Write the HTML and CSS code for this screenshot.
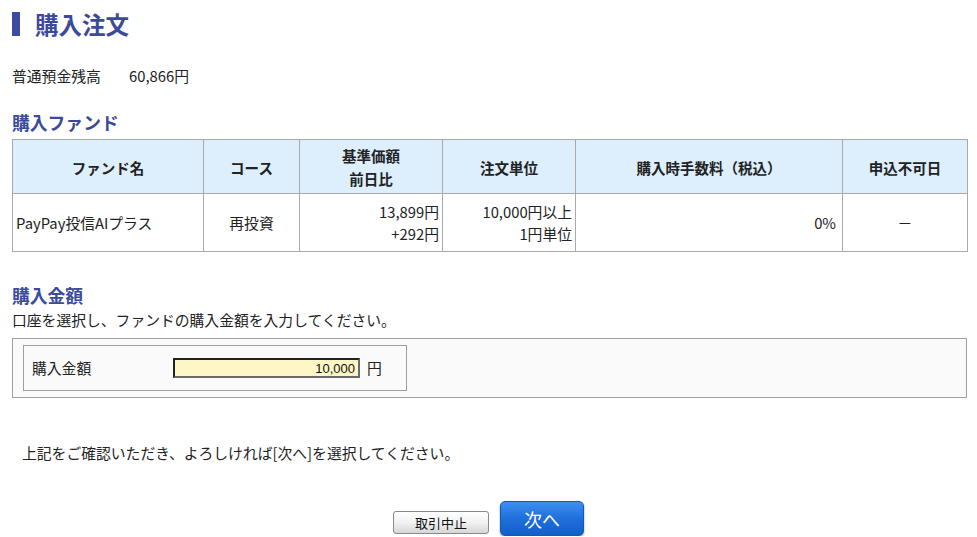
FILE: index.html
```
<!DOCTYPE html>
<html lang="ja">
<head>
  <meta charset="UTF-8">
  <meta name="viewport" content="width=device-width, initial-scale=1.0">
  <title>購入注文</title>
  <link rel="stylesheet" href="styles.css">
</head>
<body>
  <div class="page">
    <h1 class="page-title">購入注文</h1>

    <p class="balance">
      <span class="balance-label">普通預金残高</span>
      <span class="balance-value">60,866円</span>
    </p>

    <h2 class="section-title">購入ファンド</h2>
    <table class="fund-table">
      <colgroup>
        <col style="width: 191px">
        <col style="width: 96px">
        <col style="width: 143px">
        <col style="width: 133px">
        <col style="width: 267px">
        <col style="width: 125px">
      </colgroup>
      <thead>
        <tr>
          <th>ファンド名</th>
          <th>コース</th>
          <th>基準価額<br>前日比</th>
          <th>注文単位</th>
          <th>購入時手数料（税込）</th>
          <th>申込不可日</th>
        </tr>
      </thead>
      <tbody>
        <tr>
          <td>PayPay投信AIプラス</td>
          <td class="center">再投資</td>
          <td class="num">13,899円<br>+292円</td>
          <td class="num">10,000円以上<br>1円単位</td>
          <td class="num fee">0%</td>
          <td class="center">－</td>
        </tr>
      </tbody>
    </table>

    <h2 class="section-title amount-title">購入金額</h2>
    <p class="note">口座を選択し、ファンドの購入金額を入力してください。</p>

    <div class="amount-panel">
      <div class="amount-box">
        <span class="amount-label">購入金額</span>
        <input type="text" class="amount-input" value="10,000">
        <span class="unit">円</span>
      </div>
    </div>

    <p class="confirm">上記をご確認いただき、よろしければ[次へ]を選択してください。</p>

    <div class="actions">
      <button class="btn-cancel">取引中止</button>
      <button class="btn-next">次へ</button>
    </div>
  </div>
</body>
</html>
```

FILE: styles.css
```
:root {
  --title: #3b4a9e;
  --border: #aaaaaa;
  --head-bg: #ddeefc;
  --text: #222222;
}
* {
  box-sizing: border-box;
  margin: 0;
  padding: 0;
}
body {
  font-family: "Noto Sans CJK JP", "Noto Sans", sans-serif;
  font-size: 14.8px;
  line-height: 22px;
  color: var(--text);
  background: #ffffff;
}
.page {
  width: 955px;
  margin-left: 12px;
  padding-top: 12px;
}
.page-title {
  display: flex;
  align-items: center;
  height: 24px;
  font-size: 23.5px;
  line-height: 24px;
  font-weight: bold;
  color: var(--title);
}
.page-title::before {
  content: "";
  width: 8px;
  height: 24px;
  background: #3b4ba4;
  margin-right: 15px;
}
.balance {
  margin-top: 29px;
  display: flex;
}
.balance-label {
  width: 117px;
}
.section-title {
  margin-top: 23px;
  font-size: 17.8px;
  line-height: 24px;
  font-weight: bold;
  color: var(--title);
}
.fund-table {
  margin-top: 5px;
  width: 955px;
  border-collapse: collapse;
  table-layout: fixed;
}
.fund-table th,
.fund-table td {
  border: 1px solid var(--border);
}
.fund-table th {
  background: var(--head-bg);
  font-size: 14.5px;
  font-weight: bold;
  line-height: 23px;
  padding: 4px 4px 3px;
  height: 54px;
  text-align: center;
}
.fund-table td {
  padding: 6px 3px 6px;
  height: 58px;
  vertical-align: middle;
}
.fund-table td.center {
  text-align: center;
}
.fund-table td.num {
  text-align: right;
}
.fund-table td.fee {
  padding-right: 6px;
}
.amount-title {
  margin-top: 31px;
}
.note {
  margin-top: 2px;
}
.amount-panel {
  margin-top: 7px;
  background: #fafafa;
  border: 1px solid #a0a0a0;
  padding: 6px 10px;
}
.amount-box {
  width: 384px;
  height: 46px;
  border: 1px solid #a0a0a0;
  display: flex;
  align-items: center;
  padding-left: 8px;
}
.amount-label {
  width: 141px;
}
.amount-input {
  width: 187px;
  height: 20px;
  background: #fcf7c4;
  border: 2px solid;
  border-color: #222222 #6a6a6a #6a6a6a #222222;
  font-family: "Liberation Sans", Arial, sans-serif;
  font-size: 13px;
  text-align: right;
  padding: 0 3px;
  color: #111111;
}
.unit {
  margin-left: 7px;
}
.confirm {
  margin-top: 44px;
  padding-left: 10px;
}
.actions {
  margin-top: 37px;
  display: flex;
  justify-content: center;
  align-items: flex-end;
  gap: 11px;
  margin-left: -12px;
  width: 977px;
}
.btn-cancel {
  width: 96px;
  height: 23px;
  font-family: inherit;
  font-size: 13px;
  line-height: 20px;
  color: #111111;
  background: linear-gradient(#ffffff, #f2f2f2 50%, #d6d6d6);
  border: 1px solid #8a8a8a;
  border-radius: 3px;
  margin-bottom: 2px;
}
.btn-next {
  width: 84px;
  height: 35px;
  font-family: inherit;
  font-size: 18px;
  color: #ffffff;
  background: linear-gradient(#3d8ff0, #1f6fdc 50%, #135fc8);
  border: 1px solid #0f58bd;
  border-radius: 5px;
  box-shadow: 0 1px 2px rgba(0, 0, 0, 0.45);
}
```
